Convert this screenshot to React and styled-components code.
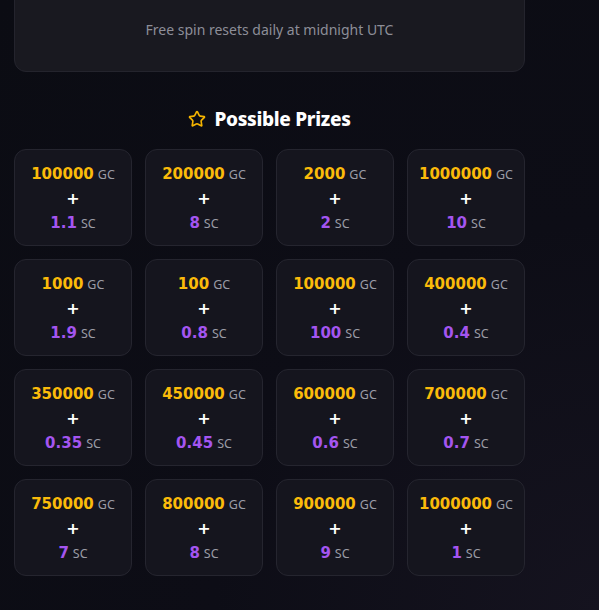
import styled, { createGlobalStyle } from "styled-components";
import { Star } from "lucide-react";

const Global = createGlobalStyle`
	html, body {
		margin: 0;
		padding: 0;
		background: #0c0c14;
	}
	body {
		font-family: "Noto Sans", "Lato", sans-serif;
		overflow: hidden;
	}
`

const Page = styled.div`
	width: 599px;
	height: 610px;
	overflow: hidden;
	box-sizing: border-box;
	padding: 0 0 0 14px;
	background: radial-gradient(circle at 100% 100%, #15131f 0%, #0d0d16 45%, #0b0c13 100%);
`

const Column = styled.div`
	width: 511px;
	display: flex;
	flex-direction: column;
	align-items: center;
`

const InfoCard = styled.div`
	width: 100%;
	box-sizing: border-box;
	margin-top: -40px;
	padding: 60px 0 32px;
	background: #191920;
	border: 1px solid #24242d;
	border-radius: 12px;
	text-align: center;
	color: #8d8e98;
	font-size: 14px;
	line-height: 18px;
`

const Heading = styled.h2`
	display: flex;
	align-items: center;
	gap: 8px;
	margin: 35px 0 18px;
	color: #ffffff;
	font-size: 19px;
	font-weight: 800;
	line-height: 24px;
	letter-spacing: -0.3px;
	svg {
		color: #f5b400;
	}
`

const Grid = styled.div`
	width: 100%;
	display: grid;
	grid-template-columns: repeat(4, 1fr);
	gap: 13px;
`

const PrizeCard = styled.div`
	height: 97px;
	box-sizing: border-box;
	background: #15151e;
	border: 1px solid #25252f;
	border-radius: 12px;
	display: flex;
	flex-direction: column;
	align-items: center;
	justify-content: center;
	gap: 6px;
	padding-top: 2px;
`

const Line = styled.div`
	display: flex;
	align-items: baseline;
	gap: 4px;
	line-height: 18px;
`

const Amount = styled.span`
	font-family: "DejaVu Sans", sans-serif;
	font-size: 15px;
	font-weight: 700;
	color: ${p => p.$kind === "sc" ? "#a455f0" : "#fbbb0a"};
`

const Unit = styled.span`
	font-size: 12.5px;
	color: #9b9ca6;
`

const Plus = styled.div`
	font-family: "DejaVu Sans", sans-serif;
	color: #ffffff;
	font-size: 16px;
	font-weight: 700;
	line-height: 18px;
`

const prizes = [
	["100000", "1.1"], ["200000", "8"], ["2000", "2"], ["1000000", "10"],
	["1000", "1.9"], ["100", "0.8"], ["100000", "100"], ["400000", "0.4"],
	["350000", "0.35"], ["450000", "0.45"], ["600000", "0.6"], ["700000", "0.7"],
	["750000", "7"], ["800000", "8"], ["900000", "9"], ["1000000", "1"],
]

const App = () => {
	return (
		<Page>
			<Global />
			<Column>
				<InfoCard>Free spin resets daily at midnight UTC</InfoCard>
				<Heading><Star size={18} strokeWidth={2.2} />Possible Prizes</Heading>
				<Grid>
					{prizes.map(([gc, sc], i) => (
						<PrizeCard key={i}>
							<Line><Amount>{gc}</Amount><Unit>GC</Unit></Line>
							<Plus>+</Plus>
							<Line><Amount $kind="sc">{sc}</Amount><Unit>SC</Unit></Line>
						</PrizeCard>
					))}
				</Grid>
			</Column>
		</Page>
	)
}
export default App;
